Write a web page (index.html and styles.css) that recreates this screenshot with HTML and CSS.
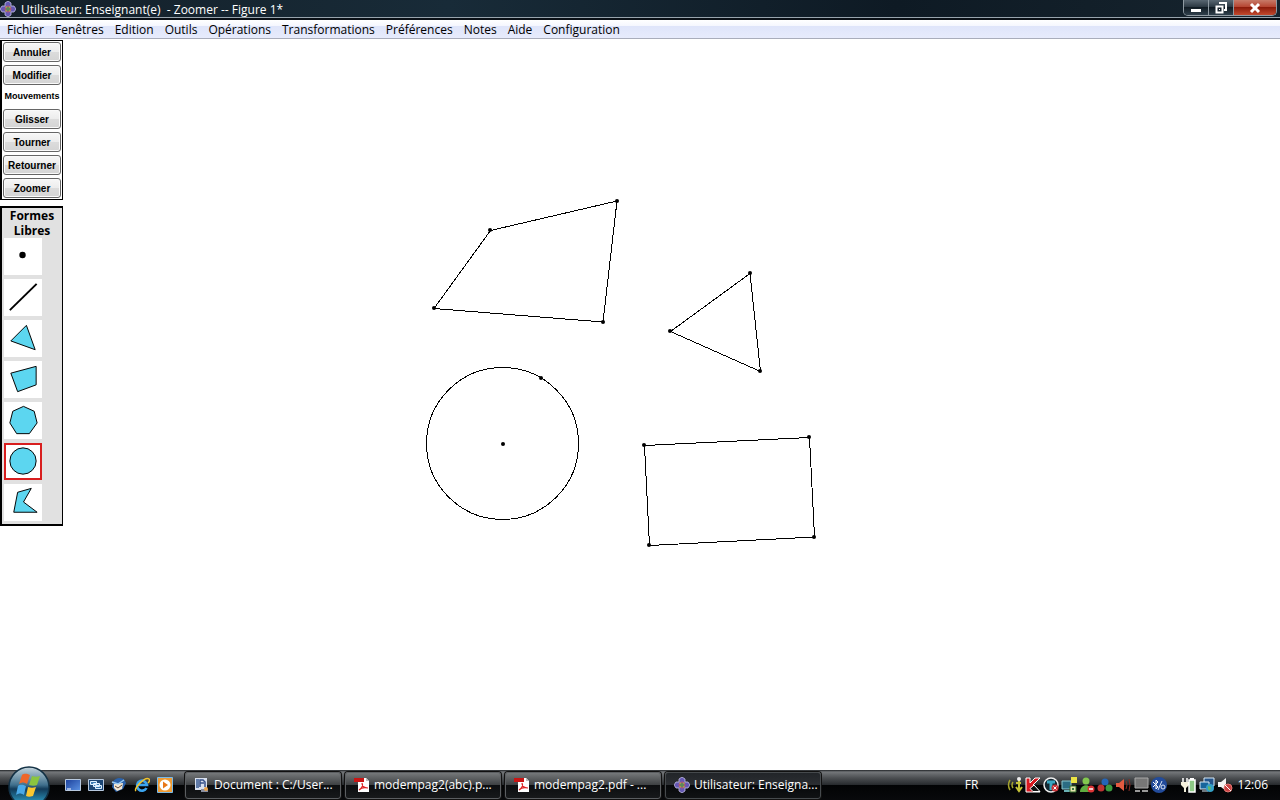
FILE: index.html
```html
<!DOCTYPE html>
<html lang="fr">
<head>
<meta charset="utf-8">
<title>Utilisateur: Enseignant(e) - Zoomer -- Figure 1*</title>
<link rel="stylesheet" href="styles.css">
</head>
<body>
<svg class="defs" width="0" height="0" aria-hidden="true">
  <defs>
    <symbol id="logo" viewBox="0 0 16 16">
      <path d="M8 0l3 2v3l3 0 2 3-2 3h-3v3l-3 2-3-2v-3H2L0 8l2-3h3V2z" fill="#6558b4" stroke="#c5c1e6" stroke-width=".8"/>
      <path d="M8 4l4 4-4 4-4-4z" fill="#a8567a"/>
      <path d="M5.500 5.500l5 5M10.500 5.500l-5 5" stroke="#c9a04c" stroke-width="1.500"/>
      <circle cx="8" cy="8" r="2" fill="#5a8a58"/>
    </symbol>
    <symbol id="pdf" viewBox="0 0 16 16">
      <path d="M4 1h8l3 3v11H4z" fill="#fff"/>
      <path d="M12 1v3h3z" fill="#bbb"/>
      <path d="M0 1h10v4H0z" fill="#c81414"/>
      <path d="M5 13c3-2 4-5 3-7M8 6c0 3 2 5 6 5M5 13c2-2 5-3 9-2" fill="none" stroke="#d22" stroke-width="1.200"/>
    </symbol>
    <linearGradient id="orb" x2="0" y2="1"><stop offset="0" stop-color="#c4d4dc"/><stop offset=".45" stop-color="#3f6f8c"/><stop offset=".55" stop-color="#123a58"/><stop offset="1" stop-color="#35b5e0"/></linearGradient>
    <linearGradient id="screen" x2="1" y2="1"><stop offset="0" stop-color="#1b3f9a"/><stop offset="1" stop-color="#5c93e4"/></linearGradient>
  </defs>
</svg>
<div class="app">
  <header class="titlebar">
    <svg class="icon" aria-hidden="true"><use href="#logo"/></svg>
    <h1 class="title">Utilisateur: Enseignant(e)&nbsp; - Zoomer -- Figure 1*</h1>
    <div class="controls">
      <button class="control" aria-label="Réduire"><svg width="12" height="12"><path d="M1 7h10v3H1z" fill="#fff"/></svg></button>
      <button class="control" aria-label="Restaurer"><svg width="12" height="12"><path d="M4 1h7v7H9M1.500 4.500h6v6h-6z" fill="none" stroke="#fff" stroke-width="2"/><path d="M4 7h1v1H4z" fill="#fff"/></svg></button>
      <button class="control control-close" aria-label="Fermer"><svg width="12" height="12"><path d="M2 2l8 8M10 2l-8 8" stroke="#fff" stroke-width="3"/></svg></button>
    </div>
  </header>
  <nav class="menubar">
    <button>Fichier</button><button>Fenêtres</button><button>Edition</button><button>Outils</button><button>Opérations</button><button>Transformations</button><button>Préférences</button><button>Notes</button><button>Aide</button><button>Configuration</button>
  </nav>
  <main class="workspace">
    <aside class="sidebar">
      <section class="panel actions">
        <button class="action">Annuler</button>
        <button class="action">Modifier</button>
        <h2 class="caption">Mouvements</h2>
        <button class="action">Glisser</button>
        <button class="action">Tourner</button>
        <button class="action">Retourner</button>
        <button class="action">Zoomer</button>
      </section>
      <section class="panel shapes">
        <h2 class="shapes-title">Formes Libres</h2>
        <button class="shape" aria-label="Point"><svg viewBox="0 0 38 38"><circle cx="18.500" cy="17.500" r="3.300" fill="#000"/></svg></button>
        <button class="shape" aria-label="Segment"><svg viewBox="0 0 38 38"><path d="M5.500 32L33 5" stroke="#000" stroke-width="2"/></svg></button>
        <button class="shape" aria-label="Triangle"><svg viewBox="0 0 38 38"><path class="fill" d="M22.500 5.500l9 25-25-9z"/></svg></button>
        <button class="shape" aria-label="Quadrilatère"><svg viewBox="0 0 38 38"><path class="fill" d="M6.500 12.500l26-7v19l-19 7z"/></svg></button>
        <button class="shape" aria-label="Polygone"><svg viewBox="0 0 38 38"><path class="fill" d="M19.500 4.500l11 5 3 12-8 11h-13l-7-11 3-12z"/></svg></button>
        <button class="shape selected" aria-label="Cercle"><svg viewBox="0 0 38 38"><circle class="fill" cx="19" cy="18.500" r="13.500"/></svg></button>
        <button class="shape" aria-label="Forme concave"><svg viewBox="0 0 38 38"><path class="fill" d="M13.500 8.500l14-4-8 14 14 10.500h-24z"/></svg></button>
      </section>
    </aside>
    <svg class="canvas" viewBox="63 39 1217 731" preserveAspectRatio="xMinYMin meet" role="img" aria-label="Figure 1">
      <g class="lines">
        <path d="M490.500 230.500L617 201L603 322L434 308.500z"/>
        <path d="M670.500 331.500L750 273.500L760.500 371.500z"/>
        <path d="M644.500 445.500L809.500 437.500L814.500 537L649.500 545.500z"/>
        <circle cx="502.500" cy="443.500" r="76"/>
      </g>
      <g class="points">
        <circle cx="490" cy="230" r="2"/><circle cx="617" cy="201" r="2"/><circle cx="603" cy="322" r="2"/><circle cx="434" cy="308" r="2"/>
        <circle cx="670" cy="331" r="2"/><circle cx="750" cy="273" r="2"/><circle cx="760" cy="371" r="2"/>
        <circle cx="644" cy="445" r="2"/><circle cx="809" cy="437" r="2"/><circle cx="814" cy="537" r="2"/><circle cx="649" cy="545" r="2"/>
        <circle cx="503" cy="444" r="2"/><circle cx="541" cy="378" r="2"/>
      </g>
    </svg>
  </main>
  <footer class="taskbar">
    <button class="start" aria-label="Démarrer">
      <svg width="42" height="42" viewBox="0 0 42 42"><circle cx="21" cy="21" r="20" fill="url(#orb)" stroke="#123044" stroke-width="1.500"/><path d="M14 9c3-2 5-1 8 0l-3 9c-3-2-5-2-8 0z" fill="#ee6629"/><path d="M24 10c3 1 5 1 8 0l-3 9c-2 1-5 1-8 0z" fill="#8bc53f"/><path d="M10 20c3-2 5-1 8 0l-2 9c-3-2-5-2-8 0z" fill="#4aa9e8"/><path d="M20 21c3 1 5 1 8 0l-3 9c-3 1-5 1-7 0z" fill="#fcc730"/></svg>
    </button>
    <div class="quick">
      <button aria-label="Bureau"><svg class="icon"><path d="M.5 2.500h15v11H.5z" fill="url(#screen)" stroke="#b8c9df"/><path d="M2 12h4" stroke="#fff"/></svg></button>
      <button aria-label="Changer de fenêtre"><svg class="icon"><path d="M.5 2.500h15v11H.5z" fill="#1c4674" stroke="#b8c9df"/><path d="M2.500 4.500h6v3h-6zM5.500 6.500h6v3h-6zM7.500 8.500h6v3h-6z" fill="#3d7db4" stroke="#e0f1ff"/></svg></button>
      <button aria-label="Messagerie"><svg class="icon"><path d="M2 5C5-1 13 1 14 4l1 2-3 6-7 3-4-5z" fill="#2b62ab"/><path d="M3 7l9-1-1 6-5 2-3-3z" fill="#f3e5d0"/><path d="M1 5l6 2 6-4" fill="none" stroke="#9acbf4" stroke-width="1.500"/><path d="M4 9l3 2 4-3" fill="none" stroke="#5b473a"/></svg></button>
      <button aria-label="Internet"><svg class="icon"><path d="M12.500 11A5 5 0 1 1 13 8H4" fill="none" stroke="#3ca4ee" stroke-width="2.600"/><path d="M2 14C-1 12 11-1 15 2c1 1 0 3-1 4" fill="none" stroke="#f2c52c" stroke-width="1.500"/></svg></button>
      <button aria-label="Lecteur multimédia"><svg class="icon"><path d="M.5.500h15v15H.5z" fill="#ee9a33" stroke="#79b9e8"/><circle cx="8" cy="8" r="5.500" fill="#fff"/><path d="M6 4.500v7l5-3.500z" fill="#e87818"/></svg></button>
    </div>
    <div class="tasks">
      <button class="task"><svg class="icon" aria-hidden="true"><path d="M1 1h12v12H1z" fill="#d9e1ef"/><path d="M2 2h3v9H2z" fill="#607ba8"/><path d="M6 10V3h3l2 2v5M6 6h4" fill="none" stroke="#344f88" stroke-width="1.500"/><path d="M7 12h7v3H7z" fill="#8a8fa0"/><circle cx="12" cy="12" r="2" fill="#e8a24c"/></svg><span>Document : C:/User...</span></button>
      <button class="task"><svg class="icon" aria-hidden="true"><use href="#pdf"/></svg><span>modempag2(abc).p...</span></button>
      <button class="task"><svg class="icon" aria-hidden="true"><use href="#pdf"/></svg><span>modempag2.pdf - ...</span></button>
      <button class="task active"><svg class="icon" aria-hidden="true"><use href="#logo"/></svg><span>Utilisateur: Enseigna...</span></button>
    </div>
    <button class="lang">FR</button>
    <div class="tray">
      <svg class="icon"><path d="M3 3q-3 5 0 10M6 5q-2 3 0 6" fill="none" stroke="#a4a32b" stroke-width="1.500"/><path d="M12 3v11M9 10l3 4 3-4M9 6h5" fill="none" stroke="#c5c338" stroke-width="2"/><circle cx="12" cy="2" r="2" fill="#eee"/></svg>
      <svg class="icon"><path d="M1 1h4v5l5-5h5L8 8l7 7H1z" fill="#d81820" stroke="#fff"/><path d="M9 8l6 6.500H8l-3-3z" fill="#111" stroke="#fff"/></svg>
      <svg class="icon"><circle cx="8" cy="8" r="7" fill="#142832" stroke="#eee" stroke-width="1.500"/><path d="M4 5h8M8 5v8" stroke="#3aa7c2" stroke-width="3"/><circle cx="12" cy="11" r="3.500" fill="#c83338"/><path d="M10.500 9.500l3 3m0-3l-3 3" stroke="#fff"/></svg>
      <svg class="icon"><path d="M1 4h9v8H1z" fill="#2b6c83" stroke="#8bc8cf"/><path d="M3 13h6v2H3z" fill="#6ab2b6"/><path d="M10 0h6v6h-6z" fill="#ece445"/><path d="M9 9h6v6H9z" fill="#e5e3ae" stroke="#34712f"/><path d="M11 11h2v2h-2z" fill="#397943"/></svg>
      <svg class="icon"><circle cx="7" cy="4" r="3.500" fill="#83c84f"/><path d="M1 15c0-9 12-9 12 0z" fill="#5fad40"/><circle cx="12" cy="12" r="3.500" fill="#dc3537"/><path d="M10 12h4" stroke="#fff" stroke-width="1.500"/></svg>
      <svg class="icon"><circle cx="8" cy="5" r="3.500" fill="#2465b8"/><circle cx="4" cy="11" r="3.500" fill="#bd3332"/><circle cx="12" cy="11" r="3.500" fill="#3c9a40"/></svg>
      <svg class="icon"><path d="M1 6h3l5-4v12L4 10H1z" fill="#e35a40"/><path d="M11 4q2 4 0 8M14 2q2 6 0 12" fill="none" stroke="#862d25"/></svg>
      <svg class="icon"><path d="M2 1h13v10H2z" fill="#777" stroke="#aaa"/><path d="M2 14h5M9 14h6" stroke="#999" stroke-width="2"/></svg>
      <svg class="icon"><circle cx="8" cy="8" r="8" fill="#224b9b"/><path d="M2 5l5 5-2 2V3l2 2-5 5" fill="none" stroke="#fff"/><circle cx="12" cy="10" r="2" fill="none" stroke="#dbe5f4"/><path d="M7 13l4-9" stroke="#dbe5f4"/></svg>
      <svg class="icon power"><path d="M2 1v4M6 1v4" stroke="#fff" stroke-width="1.500"/><path d="M0 5h8v3l-3 3v4H3v-4L0 8z" fill="#f4f1dc"/><path d="M8 3h6v12H8z" fill="#8dc985" stroke="#fff" stroke-width="1.500"/><path d="M9 1h4v2H9z" fill="#fff"/></svg>
      <svg class="icon"><path d="M5 1h10v8H5z" fill="#24558c" stroke="#d9eaf6"/><path d="M1 5h9v7H1zM3 14h6" fill="#18659c" stroke="#d9eaf6"/><circle cx="11" cy="11" r="4" fill="#35a0c8"/><path d="M9 9l3 1-1 4-2-2z" fill="#64b868"/></svg>
      <svg class="icon"><path d="M1 5h3l5-4v13l-5-4H1z" fill="#f3f3f3"/><circle cx="11" cy="11" r="4" fill="#c94143" stroke="#e57a75"/><path d="M8 8l6 6" stroke="#fff"/></svg>
    </div>
    <time class="clock">12:06</time>
  </footer>
</div>
</body>
</html>
```
FILE: styles.css
```css
* { box-sizing: border-box; }
body { margin: 0; background: #fff; font: 12px/16px "Open Sans", "Noto Sans", sans-serif; }
button { margin: 0; padding: 0; border: 0; background: none; color: inherit; font: inherit; white-space: nowrap; }
h1, h2 { margin: 0; font-size: inherit; }
svg { display: block; flex: none; }
.defs { position: absolute; }
.icon { width: 16px; height: 16px; }
.app { display: flex; flex-direction: column; min-height: 100vh; overflow: hidden; }

.titlebar { display: flex; align-items: center; gap: 5px; height: 20px; color: #fff; background: linear-gradient(90deg, #142029, #182b38 35%, #0e1a24 70%, #16242e); border-bottom: 2px solid #0a1016; box-shadow: inset 0 -1px #98a4ad; }
.title { flex: 1; padding-top: 2px; font-weight: 400; white-space: nowrap; }
.controls { display: flex; align-self: flex-start; margin-right: 3px; border: 1px solid #8f9aa2; border-top: 0; border-radius: 0 0 5px 5px; overflow: hidden; }
.control { display: grid; place-items: center; width: 25px; height: 15px; border-right: 1px solid #8f9aa2; background: linear-gradient(#596772, #27343e 50%, #111c24 50%, #30404c); }
.control-close { width: 42px; border: 0; background: linear-gradient(#c77a68, #b4402c 50%, #8d1c0b 50%, #c24a2e); }

.menubar { display: flex; gap: 11px; height: 19px; padding: 2px 0 0 7px; background: linear-gradient(#fff, #f4f6fe 35%, #dfe5fa 36%, #e7ebfc); border-bottom: 1px solid #a9adbb; }

.workspace { display: flex; flex: 1; min-height: 0; }
.sidebar { display: flex; flex-direction: column; flex: none; gap: 6px; width: 63px; padding-top: 1px; }
.panel { display: flex; flex-direction: column; border: solid #000; border-width: 2px 1px 2px 2px; }
.actions { gap: 3px; padding: 1px; border-width: 1px 1px 1px 2px; }
.action { height: 20px; padding-top: 2px; border: 1px solid #666; border-radius: 3px; background: linear-gradient(#f7f7f7, #ececec 50%, #dcdcdc 50%, #d4d4d4); box-shadow: inset 0 0 0 1px #fafafa; font: bold 10px/16px "Liberation Sans", sans-serif; }
.caption { height: 18px; font: bold 9px/16px "Liberation Sans", sans-serif; text-align: center; }
.shapes { align-items: flex-start; gap: 4px; padding: 0 2px 3px; background: #e1e1e1; }
.shapes-title { width: 100%; margin-bottom: -4px; font-size: 12px; line-height: 15px; text-align: center; }
.shape { width: 38px; height: 37px; background: #fff; }
.shape svg { width: 38px; height: 37px; }
.shape.selected { outline: 2px solid #d81e1e; outline-offset: -2px; }
.fill { fill: #5cd6f0; stroke: #000; }
.canvas { flex: 1; min-width: 0; align-self: flex-start; }
.lines { fill: none; stroke: #000; shape-rendering: crispEdges; }

.taskbar { display: flex; align-items: center; height: 30px; color: #fff; background: linear-gradient(#1f2225, #74777a 2px, #4b4e51 8px, #26292c 50%, #020304 50%, #08090b); }
.start { display: flex; align-items: flex-start; align-self: flex-end; width: 42px; height: 34px; margin-left: 8px; }
.quick { display: flex; gap: 7px; margin-left: 15px; }
.tasks { display: flex; flex: 1; min-width: 0; gap: 4px; margin-left: 12px; }
.task { display: flex; align-items: center; gap: 4px; flex: 0 1 156px; min-width: 0; height: 27px; padding: 0 8px; border: 1px solid #5b5e61; border-radius: 3px; background: linear-gradient(#75787a, #3d4042 48%, #0c0e10 50%, #17191b); box-shadow: 0 0 0 1px #111; overflow: hidden; }
.task.active { border-color: #464a4d; background: linear-gradient(#222529, #2b2e32 48%, #07090b 50%, #101214); }
.lang { margin-right: 29px; }
.tray { display: flex; gap: 2px; }
.power { margin-left: 12px; }
.clock { margin: 0 12px 0 4px; }
```
